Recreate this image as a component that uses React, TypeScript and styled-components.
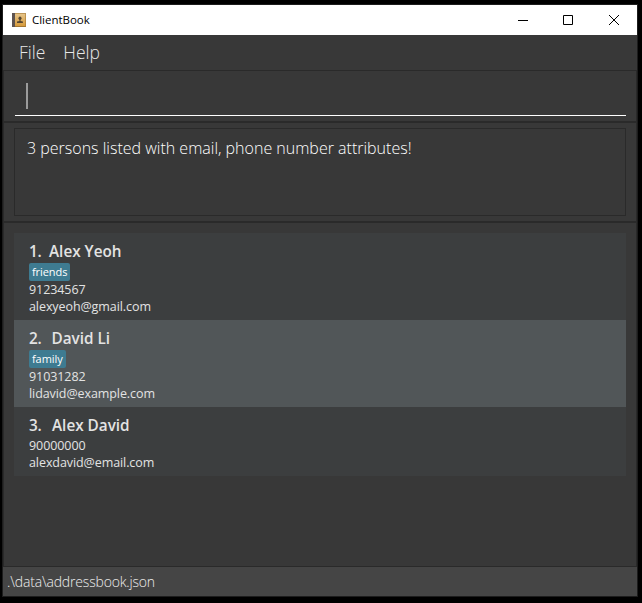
import React from "react";
import styled, { createGlobalStyle } from "styled-components";

const Global = createGlobalStyle`
  * { box-sizing: border-box; }
  body { margin: 0; background: #000; }
`;

const Desktop = styled.div`
  width: 642px;
  height: 603px;
  padding: 4px 4px 5px 2px;
  background: #000;
  overflow: hidden;
  font-family: "Open Sans", "Noto Sans", sans-serif;
  white-space: pre;
`;

const Window = styled.div`
  display: flex;
  flex-direction: column;
  height: 593px;
  border: 1px solid #1d1d1d;
  background: #383838;
`;

const TitleBar = styled.header`
  display: flex;
  align-items: center;
  flex: 0 0 30px;
  padding-left: 9px;
  background: #fff;
`;

const Title = styled.span`
  flex: 1;
  margin-left: 6px;
  color: #000;
  font-size: 11.5px;
  line-height: 30px;
  letter-spacing: -0.02px;
`;

const Control = styled.span<{ $width?: number }>`
  display: flex;
  justify-content: center;
  width: ${(p) => p.$width ?? 45}px;
`;

const MenuBar = styled.nav`
  display: flex;
  flex: 0 0 36px;
  gap: 18px;
  padding-left: 16px;
  border-bottom: 1px solid #2a2a2a;
`;

const MenuItem = styled.span`
  color: #e8e8e8;
  font-size: 17.5px;
  font-weight: 300;
  line-height: 35px;
`;

const CommandPane = styled.section`
  flex: 0 0 52px;
  padding: 10px 10px 0 11px;
  border: solid #2a2a2a;
  border-width: 0 1px 2px;
`;

const CommandField = styled.div`
  height: 35px;
  padding: 2px 0 0 11px;
  border-bottom: 1px solid #fff;
`;

const Caret = styled.div`
  width: 2px;
  height: 26px;
  background: #9b9b9b;
`;

const ResultPane = styled.section`
  flex: 0 0 100px;
  padding: 5px 10px;
  border: solid #2a2a2a;
  border-width: 0 1px 2px;
`;

const ResultBox = styled.div`
  height: 88px;
  padding: 7px 12px;
  border: 1px solid #2a2a2a;
  color: #fff;
  font-size: 16px;
  font-weight: 300;
  line-height: 24px;
`;

const ListPane = styled.main`
  flex: 1;
  padding: 10px 10px 0;
  border: solid #2a2a2a;
  border-width: 0 1px;
`;

const Card = styled.article<{ $alt: boolean; $height: number }>`
  height: ${(p) => p.$height}px;
  padding: 7px 15px 0;
  background: ${(p) => (p.$alt ? "#515658" : "#3c3e3f")};
  color: #e3e3e3;
`;

const Name = styled.h2`
  display: flex;
  margin: 0;
  height: 23px;
  font-size: 15.3px;
  font-weight: 600;
  line-height: 22px;
`;

const Ordinal = styled.span<{ $width: number }>`
  width: ${(p) => p.$width}px;
  letter-spacing: -0.3px;
`;

const Tag = styled.span`
  display: block;
  width: fit-content;
  height: 18px;
  padding: 0 3px;
  border-radius: 2px;
  background: #3e7b91;
  color: #fff;
  font-size: 11px;
  line-height: 18px;
  letter-spacing: -0.08px;
`;

const Field = styled.div`
  height: 17px;
  font-size: 12.5px;
  line-height: 17px;
  letter-spacing: -0.08px;
`;

const StatusBar = styled.footer`
  flex: 0 0 30px;
  min-height: 0;
  padding-left: 4px;
  border-top: 1px solid #2a2a2a;
  background: #454545;
  color: #eee;
  font-size: 14px;
  font-weight: 300;
  line-height: 30px;
  letter-spacing: -0.18px;
`;

const BookIcon = () => (
  <svg width="14" height="14" viewBox="0 0 14 14">
    <defs>
      <linearGradient id="cover" x2="0" y2="1">
        <stop stopColor="#e6c58b" />
        <stop offset="1" stopColor="#d79b3c" />
      </linearGradient>
    </defs>
    <rect width="14" height="14" rx=".5" fill="#a47732" />
    <rect x="3" y=".6" width="10.4" height="12.4" fill="url(#cover)" />
    <rect width="3" height="14" fill="#5d5350" />
    <ellipse cx="8" cy="5.200" rx="1.5" ry="1.8" fill="#554631" />
    <path d="M7.400 6h1.200v1.900l2.300.7V10H5V8.600l2.400-.7z" fill="#554631" />
  </svg>
);

const people = [
  { name: "Alex Yeoh", tag: "friends", phone: "91234567", email: "alexyeoh@gmail.com", height: 87, indent: 20 },
  { name: "David Li", tag: "family", phone: "91031282", email: "lidavid@example.com", height: 87, indent: 22.5 },
  { name: "Alex David", tag: null, phone: "90000000", email: "alexdavid@email.com", height: 69, indent: 23 },
];

export default function App() {
  return (
    <Desktop>
      <Global />
      <Window>
        <TitleBar>
          <BookIcon />
          <Title>ClientBook</Title>
          <Control>
            <svg width="10" height="10" shapeRendering="crispEdges"><path d="M0 5.500h10" stroke="#000" /></svg>
          </Control>
          <Control $width={46}>
            <svg width="10" height="10"><path d="M.5.5h9v9h-9z" fill="none" stroke="#000" /></svg>
          </Control>
          <Control $width={46}>
            <svg width="10" height="10"><path d="M0 0l10 10M10 0L0 10" stroke="#000" /></svg>
          </Control>
        </TitleBar>
        <MenuBar>
          <MenuItem>File</MenuItem>
          <MenuItem>Help</MenuItem>
        </MenuBar>
        <CommandPane>
          <CommandField><Caret /></CommandField>
        </CommandPane>
        <ResultPane>
          <ResultBox>3 persons listed with email, phone number attributes!</ResultBox>
        </ResultPane>
        <ListPane>
          {people.map((p, i) => (
            <Card key={p.phone} $alt={i % 2 === 1} $height={p.height}>
              <Name><Ordinal $width={p.indent}>{i + 1}.</Ordinal><span>{p.name}</span></Name>
              {p.tag && <Tag>{p.tag}</Tag>}
              <Field>{p.phone}</Field>
              <Field>{p.email}</Field>
            </Card>
          ))}
        </ListPane>
        <StatusBar>.\data\addressbook.json</StatusBar>
      </Window>
    </Desktop>
  );
}
